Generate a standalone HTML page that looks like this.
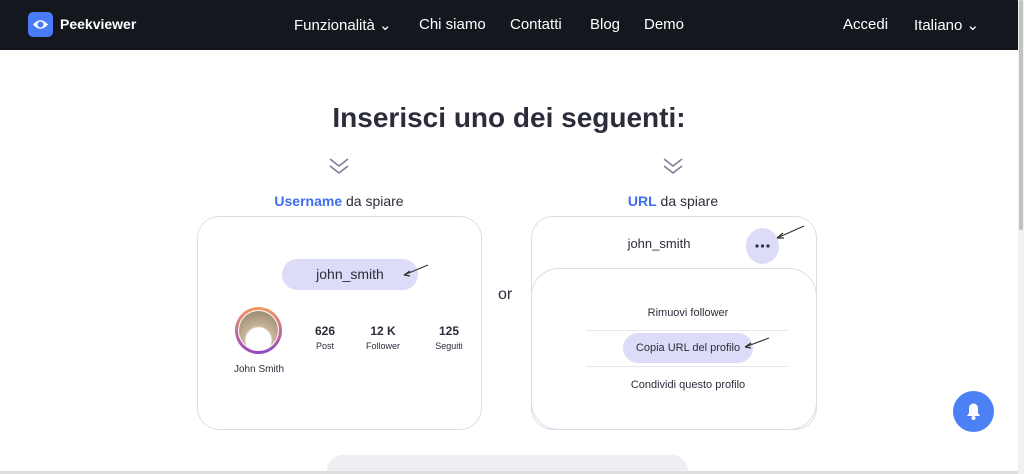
<!DOCTYPE html>
<html><head><meta charset="utf-8"><style>
*{margin:0;padding:0;box-sizing:border-box}
html,body{width:1024px;height:474px;overflow:hidden}
body{background:#fff;font-family:"Liberation Sans",sans-serif;position:relative;color:#2b2d3a}
.nav{position:absolute;left:0;top:0;width:1018px;height:50px;background:#15171f;color:#fff;font-size:15px}
.nav span{position:absolute;top:16px}
.logo{position:absolute;left:28px;top:12px;width:25px;height:25px;background:#4a7bf7;border-radius:5px}
.card{position:absolute;border:1px solid #dcdde8;border-radius:22px;background:#fff}
.pill{position:absolute;background:#dcdcf8;border-radius:18px;text-align:center}
.a{position:absolute;font-size:11px;text-align:center}
</style></head><body>
<div class="nav">
<div class="logo"><svg width="25" height="25" viewBox="0 0 25 25"><path d="M5 12.5Q12.5 4 20 12.5Q12.5 21 5 12.5Z" fill="#fff"/><circle cx="12.5" cy="12.5" r="3" fill="#4a7bf7"/></svg></div>
<span style="left:60px;font-weight:bold;font-size:14px">Peekviewer</span>
<span style="left:294px">Funzionalità ⌄</span>
<span style="left:419px">Chi siamo</span>
<span style="left:510px">Contatti</span>
<span style="left:590px">Blog</span>
<span style="left:644px">Demo</span>
<span style="left:843px">Accedi</span>
<span style="left:914px">Italiano ⌄</span>
</div>
<div style="position:absolute;right:0;top:0;width:6px;height:474px;background:#f1f1f1"><div style="margin:0 1px;height:230px;background:#c1c1c1;border-radius:3px"></div></div>
<div style="position:absolute;left:0;top:102px;width:1018px;text-align:center;font-size:28px;font-weight:bold;color:#2b2d3a">Inserisci uno dei seguenti:</div>
<svg style="position:absolute;left:328px;top:156px" width="22" height="22"><path d="M2 3l9 7 9-7M2 10l9 7 9-7" stroke="#7a7e95" stroke-width="1.5" fill="none"/></svg>
<svg style="position:absolute;left:662px;top:156px" width="22" height="22"><path d="M2 3l9 7 9-7M2 10l9 7 9-7" stroke="#7a7e95" stroke-width="1.5" fill="none"/></svg>
<div style="position:absolute;left:196px;width:286px;top:193px;text-align:center;font-size:14px"><b style="color:#3d6ef0">Username</b> da spiare</div>
<div style="position:absolute;left:530px;width:286px;top:193px;text-align:center;font-size:14px"><b style="color:#3d6ef0">URL</b> da spiare</div>
<div class="card" style="left:197px;top:216px;width:285px;height:214px"></div>
<div class="pill" style="left:282px;top:259px;width:136px;height:31px;line-height:31px;font-size:14px">john_smith</div>
<svg style="position:absolute;left:398px;top:262px" width="32" height="18"><path d="M30 3L6 13M6 13l6-4M6 13l6 1" stroke="#333" stroke-width="1.2" fill="none"/></svg>
<div style="position:absolute;left:235px;top:307px;width:47px;height:47px;border-radius:50%;background:linear-gradient(#f29a5a,#9147c8);padding:3px"><div style="width:100%;height:100%;border-radius:50%;background:#fff;padding:1px"><div style="width:100%;height:100%;border-radius:50%;background:radial-gradient(circle at 50% 75%,#fff 35%,#c9b59b 40%,#8a7a66)"></div></div></div>
<div class="a" style="left:226px;top:364px;width:66px;font-size:10px">John Smith</div>
<div class="a" style="left:305px;top:324px;width:40px;font-weight:bold;font-size:12px">626</div>
<div class="a" style="left:305px;top:341px;width:40px;font-size:9px">Post</div>
<div class="a" style="left:363px;top:324px;width:40px;font-weight:bold;font-size:12px">12 K</div>
<div class="a" style="left:358px;top:341px;width:50px;font-size:9px">Follower</div>
<div class="a" style="left:429px;top:324px;width:40px;font-weight:bold;font-size:12px">125</div>
<div class="a" style="left:426px;top:341px;width:46px;font-size:9px">Seguiti</div>
<div style="position:absolute;left:498px;top:286px;font-size:16px">or</div>
<div class="card" style="left:531px;top:216px;width:286px;height:214px"></div>
<div style="position:absolute;left:596px;top:236px;width:126px;text-align:center;font-size:13px">john_smith</div>
<div style="position:absolute;left:746px;top:228px;width:33px;height:36px;border-radius:50%;background:#dcdcf8"><svg width="33" height="36"><circle cx="11" cy="18" r="1.6" fill="#2b2d3a"/><circle cx="16.5" cy="18" r="1.6" fill="#2b2d3a"/><circle cx="22" cy="18" r="1.6" fill="#2b2d3a"/></svg></div>
<svg style="position:absolute;left:772px;top:224px" width="34" height="18"><path d="M32 2L5 14M5 14l6-5M5 14l7 0" stroke="#333" stroke-width="1.2" fill="none"/></svg>
<div class="card" style="left:531px;top:268px;width:286px;height:162px;border-radius:28px"></div>
<div class="a" style="left:590px;top:307px;width:196px">Rimuovi follower</div>
<div style="position:absolute;left:586px;top:330px;width:202px;height:1px;background:#e6e6ee"></div>
<div class="pill" style="left:623px;top:333px;width:130px;height:30px;line-height:30px;font-size:11px">Copia URL del profilo</div>
<svg style="position:absolute;left:740px;top:336px" width="32" height="18"><path d="M29 2L5 11M5 11l6-4M5 11l6 1" stroke="#333" stroke-width="1.2" fill="none"/></svg>
<div style="position:absolute;left:586px;top:366px;width:202px;height:1px;background:#e6e6ee"></div>
<div class="a" style="left:590px;top:379px;width:196px">Condividi questo profilo</div>
<div style="position:absolute;left:953px;top:391px;width:41px;height:41px;border-radius:50%;background:#4c80f5"><svg width="41" height="41" viewBox="0 0 41 41"><path d="M14 25h13l-2-3v-5a4.5 4.5 0 0 0-9 0v5z" fill="#fff"/><circle cx="20.5" cy="27" r="2" fill="#fff"/></svg></div>
<div style="position:absolute;left:327px;top:455px;width:361px;height:16px;border-radius:16px 16px 0 0;background:#eeeef3"></div>
<div style="position:absolute;left:0;top:471px;width:1018px;height:3px;background:#dedede"></div>
</body></html>
